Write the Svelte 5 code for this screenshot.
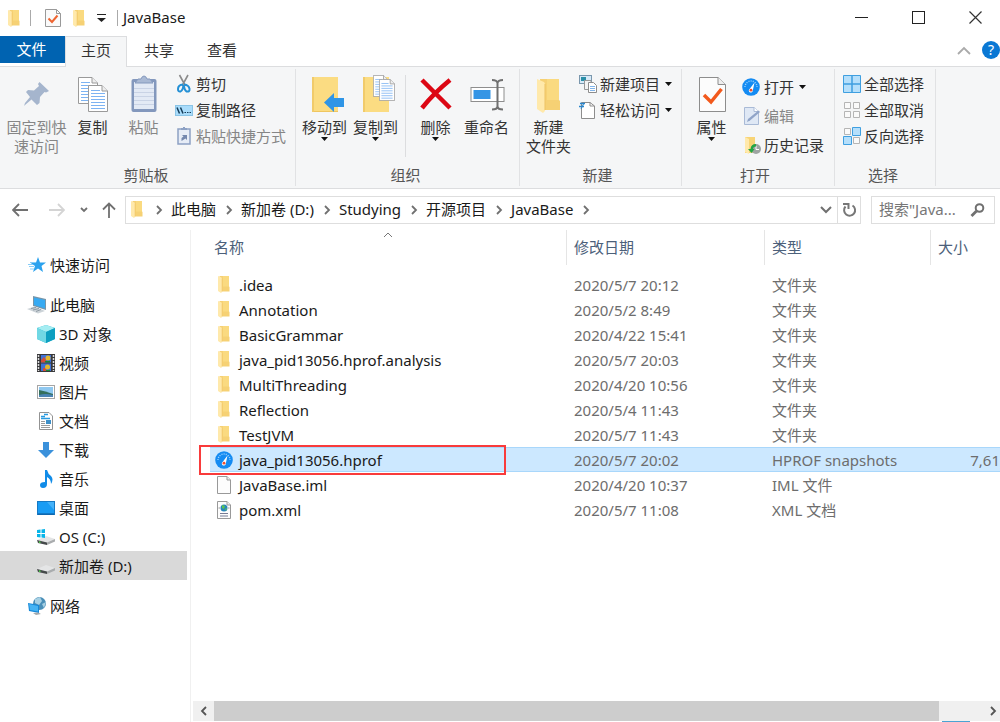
<script lang="ts">
	type Entry = {
		name: string;
		date: string;
		type: string;
		icon: string;
		size?: string;
		selected?: boolean;
	};

	const tabs = ['主页', '共享', '查看'];
	const crumbs = ['此电脑', '新加卷 (D:)', 'Studying', '开源项目', 'JavaBase'];

	const navGroups = [
		{ label: '快速访问', icon: 'star', children: [] },
		{
			label: '此电脑',
			icon: 'pc',
			children: [
				{ label: '3D 对象', icon: 'cube' },
				{ label: '视频', icon: 'video' },
				{ label: '图片', icon: 'picture' },
				{ label: '文档', icon: 'document' },
				{ label: '下载', icon: 'download' },
				{ label: '音乐', icon: 'music' },
				{ label: '桌面', icon: 'desktop' },
				{ label: 'OS (C:)', icon: 'osdrive' },
				{ label: '新加卷 (D:)', icon: 'drive' }
			]
		},
		{ label: '网络', icon: 'network', children: [] }
	];

	const entries: Entry[] = [
		{ name: '.idea', date: '2020/5/7 20:12', type: '文件夹', icon: 'folder' },
		{ name: 'Annotation', date: '2020/5/2 8:49', type: '文件夹', icon: 'folder' },
		{ name: 'BasicGrammar', date: '2020/4/22 15:41', type: '文件夹', icon: 'folder' },
		{ name: 'java_pid13056.hprof.analysis', date: '2020/5/7 20:03', type: '文件夹', icon: 'folder' },
		{ name: 'MultiThreading', date: '2020/4/20 10:56', type: '文件夹', icon: 'folder' },
		{ name: 'Reflection', date: '2020/5/4 11:43', type: '文件夹', icon: 'folder' },
		{ name: 'TestJVM', date: '2020/5/7 11:43', type: '文件夹', icon: 'folder' },
		{
			name: 'java_pid13056.hprof',
			date: '2020/5/7 20:02',
			type: 'HPROF snapshots',
			icon: 'gauge',
			size: '7,61',
			selected: true
		},
		{ name: 'JavaBase.iml', date: '2020/4/20 10:37', type: 'IML 文件', icon: 'file' },
		{ name: 'pom.xml', date: '2020/5/7 11:08', type: 'XML 文档', icon: 'xml' }
	];

	let activeTab = $state('主页');
	let activeNav = $state('新加卷 (D:)');
	let query = $state('');
</script>

{#snippet folder(w: number, h: number)}
	<svg width={w} height={h} viewBox="0 0 24 34" preserveAspectRatio="none" aria-hidden="true">
		<path d="M3 0H22V21L23 22V31H4Z" fill="#f6d174" />
		<path d="M10 0H22V21H10Z" fill="#fada80" />
		<path d="M0 0L7 3Q8 4 8 6V32L6 34L0 30Z" fill="#ffe9ab" />
		<path d="M8 5V31" stroke="#edc363" stroke-width="1" />
	</svg>
{/snippet}

{#snippet sheet(x: number, y: number, w: number, h: number)}
	<svg {x} {y} width={w} height={h} viewBox="0 0 20 27" preserveAspectRatio="none">
		<path d="M.5 .5H14L19.500 6V26.500H.5Z" fill="#fff" stroke="#9a9a9a" />
		<path d="M14 .5V6H19.500" fill="#eee" stroke="#9a9a9a" />
		<path d="M3 5.500H12M3 8.500H17M3 11.500H17M3 14.500H17M3 17.500H17M3 20.500H17M3 23.500H17" stroke="#7db3f2" />
	</svg>
{/snippet}

{#snippet gauge(size: number)}
	<svg width={size} height={size} viewBox="0 0 18 18" aria-hidden="true">
		<circle cx="9" cy="9" r="8.800" fill="#148bf2" />
		<path d="M3 9A6 6 0 0 1 15 9" fill="none" stroke="#9bd2ff" stroke-width="1.400" stroke-dasharray="1 1.200" />
		<path d="M12.500 4.500L10.800 12.500A2 2 0 1 1 7.600 11Z" fill="#fff" />
		<circle cx="9" cy="12.200" r="1.400" fill="#f0502d" />
	</svg>
{/snippet}

{#snippet bigIcon(name: string)}
	<svg width="40" height="40" viewBox="0 0 40 40" aria-hidden="true">
		{#if name === 'pin'}
			<path d="M22.500 7L32 16L29 17.500L27.500 17L23 22L22.500 28L20 30L14.500 24.500L8 30L7 31L8 28L13 22L9 17L11 15L17 15.500L22 11L21 9Z" fill="#a5b5cd" />
		{:else if name === 'copy'}
			{@render sheet(5, 2, 20, 27)}
			{@render sheet(15, 10, 20, 27)}
		{:else if name === 'paste'}
			<rect x="7.500" y="4" width="25" height="33" rx="2" fill="#8398bd" />
			<rect x="10" y="7" width="20" height="27" fill="#e3eaf5" />
			<path d="M10 13.500H30M10 17.500H30M10 21.500H30M10 25.500H30M10 29.500H30" stroke="#c9d3e5" />
			<path d="M11 8L14 4H17Q18 1 20 1T23 4H26L29 8Z" fill="#a9b9d4" stroke="#8398bd" />
		{:else if name === 'moveto'}
			<path d="M7 2H33V37H7Z" fill="#fbdc82" />
			<path d="M7 2H9V37H7Z" fill="#f1cb6b" />
			<path d="M9 36.500H33" stroke="#efc660" />
			<path d="M19 27.500L29 18V23H39V32H29V37Z" fill="#2f95e6" />
		{:else if name === 'copyto'}
			<path d="M7 2H33V37H7Z" fill="#fbdc82" />
			<path d="M7 2H9V37H7Z" fill="#f1cb6b" />
			{@render sheet(17, 0, 15, 22)}
			{@render sheet(23, 4, 16, 22)}
		{:else if name === 'delete'}
			<path d="M6 5L34 33M34 5Q18 18 6 33" fill="none" stroke="#dc0714" stroke-width="4.500" />
		{:else if name === 'rename'}
			<rect x="4" y="12.500" width="33" height="14" fill="#fff" stroke="#8e8e8e" />
			<rect x="6.500" y="15" width="17" height="9" fill="#3595e5" />
			<path d="M25 5Q30 5 30.500 8Q31 5 36 5M25 34.500Q30 34.500 30.500 31.500Q31 34.500 36 34.500M30.500 7V33" fill="none" stroke="#707070" stroke-width="2" />
		{:else if name === 'newfolder'}
			<svg x="8" y="4" width="24" height="34">{@render folder(24, 34)}</svg>
		{:else if name === 'props'}
			<path d="M7.500 2.500H26L33.500 9.500V36.500H7.500Z" fill="#fcfcfc" stroke="#8d8d8d" />
			<path d="M26 2.500V9.500H33.500" fill="#eee" stroke="#8d8d8d" />
			<path d="M12 20L19 27L29.500 14" fill="none" stroke="#f2591c" stroke-width="3.500" />
		{/if}
	</svg>
{/snippet}

{#snippet icon(name: string)}
	<svg width="20" height="20" viewBox="0 0 20 20" aria-hidden="true">
		{#if name === 'cut'}
			<path d="M5.500 1L11.500 12M14 1L8 12" fill="none" stroke="#8b8b8b" stroke-width="1.600" />
			<path d="M9 10.500Q4 11 4 15Q4 18 6.500 17.500Q9 16 9.500 11Q10.500 16 12.500 17.500Q16 18 15.500 15Q15 11 10 10.500" fill="none" stroke="#2490d5" stroke-width="2" />
		{:else if name === 'path'}
			<rect x="1.500" y="5.500" width="17" height="10" fill="#a9dcfb" stroke="#8ac4e6" />
			<path d="M3 7.500L5.500 13.500M6.500 7.500L9 13.500" stroke="#163d59" stroke-width="1.500" />
			<path d="M10.500 12.500H17" stroke="#163d59" stroke-dasharray="1.500 1" />
		{:else if name === 'pastelink'}
			<rect x="4" y="3" width="12" height="15" fill="#e6ecf6" stroke="#8da1c4" stroke-width="1.500" />
			<path d="M7 4V2H9V1H11V2H13V4Z" fill="#8da1c4" />
			<path d="M7.500 15V12L9.500 10.500L8 9H13V14L11.500 12.500Z" fill="#7488ae" />
		{:else if name === 'newitem'}
			<rect x="1.500" y="1.500" width="12" height="8" fill="#d7eaf8" stroke="#7a97ad" />
			<rect x="3" y="3" width="5" height="4" fill="#2b8fa8" />
			<path d="M6.500 6.500H13V15.500H6.500Z" fill="#f4f4f4" stroke="#999" />
			<path d="M10.500 8.500H15.500L18.500 11.500V18.500H10.500Z" fill="#fff" stroke="#8d8d8d" />
			<path d="M12 12.500H17M12 14.500H17M12 16.500H17" stroke="#82b5ea" />
		{:else if name === 'easy'}
			<path d="M3.500 2.500H12L16.500 6V18.500H3.500Z" fill="#fff" stroke="#8d8d8d" />
			<path d="M12 2.500V6H16.500" fill="none" stroke="#8d8d8d" />
			<path d="M2 3.500H7M1 6.500H6" stroke="#2b86cc" stroke-width="1.500" />
			<path d="M6 3L3 9" stroke="#2b86cc" />
		{:else if name === 'edit'}
			<path d="M2.500 1.500H12L16.500 5.500V18.500H2.500Z" fill="#dfe8f5" stroke="#a9bad6" />
			<path d="M12 1.500V5.500H16.500" fill="#fff" stroke="#a9bad6" />
			<path d="M5 16L6 13L16.500 4.500L18 6L8 14.500Z" fill="#90a4c8" />
		{:else if name === 'history'}
			<path d="M3 2H13V18H3Z" fill="#f8d476" />
			<path d="M3 2L7 4V19L3 17Z" fill="#ffe9ab" />
			<circle cx="14" cy="14" r="5" fill="#9ea4a2" />
			<path d="M14 11V14.500H17" fill="none" stroke="#fff" />
			<path d="M14 9Q9 9 8.500 14H6L9.500 18L12.500 14H11Q11 11.500 14 11.500Z" fill="#25a545" />
		{:else if name === 'all'}
			<path d="M1.500 1.500H18.500V18.500H1.500Z" fill="#b5dffb" stroke="#3f9fe0" />
			<path d="M10 1.500V18.500M1.500 10H18.500" stroke="#3f9fe0" stroke-width="1.500" />
		{:else if name === 'none'}
			<path d="M2.500 2.500H8.500V8.500H2.500ZM11.500 2.500H17.500V8.500H11.500ZM2.500 11.500H8.500V17.500H2.500ZM11.500 11.500H17.500V17.500H11.500Z" fill="#fafafa" stroke="#b5b5b5" />
		{:else if name === 'invert'}
			<path d="M2.500 2.500H8.500V8.500H2.500ZM11.500 11.500H17.500V17.500H11.500Z" fill="#fafafa" stroke="#b5b5b5" />
			<path d="M10.500 1.500H18.500V9.500H10.500ZM1.500 10.500H9.500V18.500H1.500Z" fill="#b5dffb" stroke="#3f9fe0" />
		{:else if name === 'star'}
			<path d="M11 2L13 7.500H19L14.500 11L16 17L11 13.500L6 17L8 11L3 7.500H9Z" fill="#2ba2ee" />
			<path d="M3 7.500H9M1 9.500H6M2 11.500H7M3 14H7" stroke="#86cdf8" />
		{:else if name === 'pc'}
			<path d="M6 1L19 4V15L6 11Z" fill="#7895a8" />
			<path d="M7 2.500L18 5V13.500L7 10Z" fill="#37aaf2" />
			<path d="M0 14L8 11.500L18 16L11 18.500Z" fill="#ccd3d8" />
			<path d="M4 13.500L9 12.500M6 15L12 13.500M9 16.500L14 14.500" stroke="#8e9aa3" />
		{:else if name === 'cube'}
			<path d="M10 1L19 4V15L10 19L1 15V4Z" fill="#2ab8cf" />
			<path d="M10 1L19 4L10 8L1 4Z" fill="#a5edf2" />
			<path d="M1 4L10 8V19L1 15Z" fill="#70d8e4" />
			<path d="M10 8L19 4V15L10 19Z" fill="#0d9fc0" />
		{:else if name === 'video'}
			<rect x="1" y="1" width="18" height="18" fill="#39393b" />
			<path d="M2.500 2V18M17.500 2V18" stroke="#ddd" stroke-width="1.500" stroke-dasharray="2 1" />
			<rect x="5" y="2" width="10" height="7.500" fill="#3f72d8" />
			<rect x="5" y="10.500" width="10" height="7.500" fill="#3f72d8" />
			<path d="M5 7L8 4L10 7V9.500H5ZM7 15H10V18H7Z" fill="#d24e36" />
			<circle cx="12" cy="5" r="2.500" fill="#e3b92c" />
			<circle cx="11.500" cy="14" r="2.500" fill="#e3b92c" />
			<path d="M9 8H14V9.500H9ZM10 17H14V18H10Z" fill="#1c8638" />
		{:else if name === 'picture'}
			<rect x="1.500" y="3.500" width="17" height="13" fill="#fff" stroke="#a5a5a5" />
			<rect x="3" y="5" width="14" height="10" fill="#8fc8f0" />
			<path d="M3 8Q9 9 17 12V15H3Z" fill="#35705d" />
			<path d="M3 13Q9 11 17 13V15H3Z" fill="#4b84b4" />
		{:else if name === 'document'}
			<path d="M3.500 1.500H13L16.500 5V18.500H3.500Z" fill="#fff" stroke="#939393" />
			<path d="M5 5.500H9M8 3.500H12M5 7.500H14" stroke="#289ae0" stroke-width="1.500" />
			<path d="M5 10.500H9M5 12.500H9M5 14.500H14M5 16.500H14" stroke="#9a9a9a" />
			<rect x="10" y="9" width="5" height="4" fill="#3d8fc8" />
		{:else if name === 'download'}
			<path d="M7 2H13V10H18L10 18L2 10H7Z" fill="#3b91db" />
		{:else if name === 'music'}
			<path d="M9 1H11Q12 5 15 7Q18 10 15 15Q15 10 11 8V15Q11 19 7 19Q4 19 4 16Q4 13 9 13Z" fill="#118ce8" />
		{:else if name === 'desktop'}
			<rect x="1" y="3" width="18" height="14" fill="#1679c4" />
			<rect x="2" y="4" width="16" height="12" fill="#199cf4" />
			<path d="M11 4H18V12Z" fill="#44b2fa" />
			<path d="M2 16H18" stroke="#0b5798" />
		{:else if name === 'osdrive' || name === 'drive'}
			<path d="M1 13L10 9L19 12L11 16Z" fill="#e4e5e6" />
			<path d="M1 13L11 15.500V18L2 16Z" fill="#45494a" />
			<path d="M11 15.500L19 12V14.500L11 18Z" fill="#a9acae" />
			<path d="M3 15L4.500 15.400" stroke="#52e34d" stroke-width="1.500" />
			{#if name === 'osdrive'}
				<path d="M1 3L4.500 2.500V6H1ZM5.500 2.500L9 2V6H5.500ZM1 7H4.500V10.500L1 10ZM5.500 7H9V11L5.500 10.500Z" fill="#08b5e9" />
			{/if}
		{:else if name === 'network'}
			<circle cx="12.500" cy="7.500" r="6.500" fill="#4a8fb8" />
			<path d="M8 3L13 1L15 5L12 9L8 7ZM15 8L19 6L17 12Z" fill="#a7d0e3" />
			<path d="M1 7L12 9V17L2 15Z" fill="#1688d8" />
			<path d="M2 8L11 10V15.500L3 14Z" fill="#45b3f3" />
			<path d="M6 17L11 16.500L14 18L9 19Z" fill="#a3a8ac" />
		{:else if name === 'file' || name === 'xml'}
			<path d="M3.500 1.500H13L16.500 5V18.500H3.500Z" fill="#fdfdfd" stroke="#999" />
			<path d="M13 1.500V5H16.500" fill="#eee" stroke="#999" />
			{#if name === 'xml'}
				<circle cx="10" cy="8" r="3.500" fill="#2686bc" />
				<path d="M8 5L11 6L10 9L8 8ZM11 9L13 8L12 11Z" fill="#5ac253" />
				<path d="M4.500 8H6M14 8H15.500" stroke="#999" />
				<path d="M6 13.500H14M6 16H14" stroke="#777c94" />
			{/if}
		{/if}
	</svg>
{/snippet}

{#snippet check()}
	<svg width="16" height="18" viewBox="0 0 16 18" aria-hidden="true">
		<path d="M.5 .5H11.500L15.500 4.500V17.500H.5Z" fill="#fafafa" stroke="#999" />
		<path d="M11.500 .5V4.500H15.500" fill="none" stroke="#999" />
		<path d="M3.500 9.500L7 13L12.500 6.500" fill="none" stroke="#ee6430" stroke-width="2" />
	</svg>
{/snippet}

{#snippet caret()}
	<svg class="caret" width="7" height="4" viewBox="0 0 7 4" aria-hidden="true"><path d="M0 0H7L3.500 4Z" fill="#111" /></svg>
{/snippet}

{#snippet chevron(color: string)}
	<svg class="chevron" width="8" height="10" viewBox="0 0 8 10" aria-hidden="true">
		<path d="M2 1L6 5L2 9" fill="none" stroke={color} stroke-width="1.800" />
	</svg>
{/snippet}

{#snippet bigButton(name: string, lines: string[], width: string, menu = false, disabled = false)}
	<button class="big {width}" {disabled}>
		{@render bigIcon(name)}
		{#each lines as line}
			<span>{line}</span>
		{/each}
		{#if menu}{@render caret()}{/if}
	</button>
{/snippet}

{#snippet smallButton(name: string, label: string, menu = false, disabled = false)}
	<button class="small" {disabled}>
		{#if name === 'gauge'}<span class="gauge">{@render gauge(18)}</span>{:else}{@render icon(name)}{/if}
		<span>{label}</span>
		{#if menu}{@render caret()}{/if}
	</button>
{/snippet}

<div class="window">
	<header class="titlebar">
		{@render folder(12, 17)}
		<span class="divider"></span>
		<button aria-label="属性">{@render check()}</button>
		<button aria-label="新建文件夹">{@render folder(12, 17)}</button>
		<button aria-label="自定义快速访问工具栏">
			<svg width="9" height="8" viewBox="0 0 9 8"><path d="M0 .5H9" stroke="#222" /><path d="M0 4H9L4.500 8Z" fill="#222" /></svg>
		</button>
		<span class="divider last"></span>
		<h1>JavaBase</h1>
		<div class="controls">
			<button aria-label="最小化"><svg width="13" height="13"><path d="M0 6.500H13" stroke="#222" /></svg></button>
			<button aria-label="最大化"><svg width="13" height="13"><rect x=".5" y=".5" width="12" height="12" fill="none" stroke="#222" /></svg></button>
			<button aria-label="关闭"><svg width="13" height="13"><path d="M.5 .5L12.500 12.500M12.500 .5L.5 12.500" stroke="#333" stroke-width="1.200" /></svg></button>
		</div>
	</header>

	<nav class="tabs">
		<button class="file">文件</button>
		{#each tabs as tab}
			<button class:active={tab === activeTab} onclick={() => (activeTab = tab)}>{tab}</button>
		{/each}
		<button class="collapse" aria-label="最小化功能区">
			<svg width="14" height="9"><path d="M1 8L7 2L13 8" fill="none" stroke="#aaa" stroke-width="1.800" /></svg>
		</button>
		<button class="help" aria-label="帮助">?</button>
	</nav>

	<div class="ribbon">
		<section class="clipboard">
			<div class="tools">
				{@render bigButton('pin', ['固定到快', '速访问'], 'wide', false, true)}
				{@render bigButton('copy', ['复制'], 'mid')}
				{@render bigButton('paste', ['粘贴'], 'mid', false, true)}
				<div class="stack">
					{@render smallButton('cut', '剪切')}
					{@render smallButton('path', '复制路径')}
					{@render smallButton('pastelink', '粘贴快捷方式', false, true)}
				</div>
			</div>
			<h2>剪贴板</h2>
		</section>
		<section class="organize">
			<div class="tools">
				{@render bigButton('moveto', ['移动到'], 'mid', true)}
				{@render bigButton('copyto', ['复制到'], 'mid', true)}
				<span class="rule"></span>
				{@render bigButton('delete', ['删除'], 'mid', true)}
				{@render bigButton('rename', ['重命名'], 'mid')}
			</div>
			<h2>组织</h2>
		</section>
		<section class="new">
			<div class="tools">
				{@render bigButton('newfolder', ['新建', '文件夹'], 'mid')}
				<div class="stack">
					{@render smallButton('newitem', '新建项目', true)}
					{@render smallButton('easy', '轻松访问', true)}
				</div>
			</div>
			<h2>新建</h2>
		</section>
		<section class="open">
			<div class="tools">
				{@render bigButton('props', ['属性'], 'mid', true)}
				<div class="stack loose">
					{@render smallButton('gauge', '打开', true)}
					{@render smallButton('edit', '编辑', false, true)}
					{@render smallButton('history', '历史记录')}
				</div>
			</div>
			<h2>打开</h2>
		</section>
		<section class="select">
			<div class="tools">
				<div class="stack">
					{@render smallButton('all', '全部选择')}
					{@render smallButton('none', '全部取消')}
					{@render smallButton('invert', '反向选择')}
				</div>
			</div>
			<h2>选择</h2>
		</section>
	</div>

	<div class="location">
		<div class="history">
			<button aria-label="后退"><svg width="16" height="14"><path d="M16 7H1.500M7 1L1 7L7 13" fill="none" stroke="#707070" stroke-width="1.800" /></svg></button>
			<button aria-label="前进" disabled><svg width="16" height="14"><path d="M0 7H14.500M9 1L15 7L9 13" fill="none" stroke="#d4d4d4" stroke-width="1.800" /></svg></button>
			<button class="recent" aria-label="最近浏览的位置"><svg width="8" height="6"><path d="M1 1L4 4L7 1" fill="none" stroke="#707070" stroke-width="1.800" /></svg></button>
			<button aria-label="上移"><svg width="14" height="16"><path d="M7 16V1.500M1 7.500L7 1.500L13 7.500" fill="none" stroke="#707070" stroke-width="1.800" /></svg></button>
		</div>
		<div class="address">
			<span class="place">{@render folder(12, 17)}</span>
			{@render chevron('#707070')}
			{#each crumbs as crumb}
				<button class="crumb">{crumb}</button>
				{@render chevron('#707070')}
			{/each}
			<button class="drop" aria-label="以前的位置"><svg width="12" height="8"><path d="M1 1L6 6L11 1" fill="none" stroke="#707070" stroke-width="2" /></svg></button>
			<button class="refresh" aria-label="刷新">
				<svg width="15" height="16" viewBox="0 0 15 16"><path d="M10.500 3.500A5.500 5.500 0 1 1 3.500 4.500" fill="none" stroke="#777" stroke-width="2" /><path d="M1 2H6.500V7" fill="none" stroke="#777" stroke-width="2" /></svg>
			</button>
		</div>
		<label class="search">
			<input type="text" aria-label="搜索" placeholder={'搜索"Java...'} bind:value={query} />
			<svg width="15" height="14" viewBox="0 0 15 14" aria-hidden="true"><circle cx="9.500" cy="5" r="3.800" fill="none" stroke="#707070" stroke-width="2" /><path d="M6.500 8L1.500 13" stroke="#707070" stroke-width="2.800" /></svg>
		</label>
	</div>

	<div class="body">
		<nav class="sidebar">
			{#each navGroups as group}
				<div class="group">
					<a href="#{group.icon}" onclick={() => (activeNav = group.label)}>{@render icon(group.icon)}{group.label}</a>
					{#each group.children as item}
						<a href="#{item.icon}" class="child" class:active={item.label === activeNav} onclick={() => (activeNav = item.label)}>
							{@render icon(item.icon)}{item.label}
						</a>
					{/each}
				</div>
			{/each}
		</nav>

		<main>
			<table>
				<thead>
					<tr>
						<th class="name">
							名称
							<svg class="sort" width="10" height="6"><path d="M1 5L5 1L9 5" fill="none" stroke="#777" /></svg>
						</th>
						<th class="date">修改日期</th>
						<th class="type">类型</th>
						<th class="size">大小</th>
					</tr>
				</thead>
				<tbody>
					{#each entries as entry}
						<tr class:selected={entry.selected}>
							<td class="name">
								<div class="entry">
									<span class="glyph">
										{#if entry.icon === 'folder'}
											{@render folder(12, 17)}
										{:else if entry.icon === 'gauge'}
											{@render gauge(18)}
										{:else}
											{@render icon(entry.icon)}
										{/if}
									</span>
									{entry.name}
								</div>
								{#if entry.selected}<span class="marker"></span>{/if}
							</td>
							<td>{entry.date}</td>
							<td>{entry.type}</td>
							<td class="amount">{entry.size ?? ''}</td>
						</tr>
					{/each}
				</tbody>
			</table>

			<div class="scrollbar">
				<button class="back" aria-label="向左滚动">{@render chevron('#555')}</button>
				<div class="track"><div class="thumb"></div></div>
				<button class="forward" aria-label="向右滚动">{@render chevron('#555')}</button>
			</div>
			<div class="viewmode"><span></span></div>
		</main>
	</div>
</div>

<style>
	:global(body) {
		margin: 0;
		background: #fff;
	}

	.window {
		display: flex;
		flex-direction: column;
		min-height: 100vh;
		overflow: hidden;
		color: #1a1a1a;
		font-family: 'Noto Sans', 'Noto Sans CJK SC', sans-serif;
		font-size: 15px;
		line-height: 20px;
	}

	button {
		display: flex;
		align-items: center;
		justify-content: center;
		padding: 0;
		border: 0;
		background: none;
		color: inherit;
		font: inherit;
		white-space: nowrap;
	}

	svg {
		flex: none;
	}

	h1,
	h2 {
		margin: 0;
		font-size: 15px;
		font-weight: 400;
	}

	.titlebar {
		display: flex;
		align-items: center;
		gap: 12px;
		height: 36px;
		padding-left: 8px;
	}

	.titlebar h1 {
		padding-bottom: 2px;
	}

	.divider {
		width: 1px;
		height: 16px;
		margin: 0 2px 0 -2px;
		background: #aaa;
	}

	.divider.last {
		margin: 0 -7px 0 -1px;
	}

	.controls {
		display: flex;
		gap: 9px;
		margin-left: auto;
	}

	.controls button {
		width: 48px;
		height: 36px;
		padding: 0 1px 1px 0;
	}

	.tabs {
		display: flex;
		height: 30px;
		border-bottom: 1px solid #dcdddf;
	}

	.tabs button {
		box-sizing: border-box;
		width: 62px;
		height: 31px;
		margin-right: 1px;
		padding-bottom: 4px;
		border: 1px solid transparent;
		border-bottom: 0;
		color: #333;
	}

	.tabs .file {
		width: 65px;
		height: 27px;
		margin: 0;
		padding: 0 2px 2px 0;
		background: #0063b1;
		color: #fff;
	}

	.tabs .active {
		border-color: #dcdddf;
		background: #f5f6f7;
	}

	.tabs .collapse {
		width: 18px;
		margin-left: auto;
	}

	.tabs .help {
		width: 18px;
		height: 18px;
		margin: 5px 0 0 8px;
		padding: 0;
		border: 0;
		border-radius: 50%;
		background: #0a78d4;
		color: #fff;
		font-size: 14px;
	}

	.ribbon {
		display: flex;
		border-bottom: 1px solid #dcdddf;
		background: #f5f6f7;
		color: #333;
	}

	.ribbon section {
		display: flex;
		flex-direction: column;
		box-sizing: border-box;
		min-height: 117px;
		margin: 2px 0;
		border-right: 1px solid #e1e2e4;
	}

	.ribbon h2 {
		margin-top: auto;
		padding-bottom: 1px;
		color: #555;
		text-align: center;
	}

	.tools {
		display: flex;
	}

	.clipboard {
		padding: 0 9px 0 6px;
	}

	.organize {
		padding: 0 7px 0 3px;
	}

	.new {
		padding: 0 9px 0 3px;
	}

	.open {
		padding: 0 10px 0 4px;
	}

	.select {
		padding: 0 11px 0 7px;
	}

	.big {
		flex-direction: column;
		justify-content: flex-start;
		padding-top: 6px;
		line-height: 19px;
	}

	.big svg {
		margin-bottom: 3px;
	}

	.wide {
		width: 61px;
	}

	.mid {
		width: 51px;
	}

	button:disabled {
		color: #868686;
	}

	.rule {
		width: 1px;
		height: 82px;
		margin: 6px 4px 0;
		background: #dcdddf;
	}

	.stack {
		display: flex;
		flex-direction: column;
		padding: 2px 0 0 5px;
	}

	.new .stack {
		padding-left: 4px;
	}

	.select .stack {
		padding-left: 0;
	}

	.loose {
		padding-top: 3px;
	}

	.small {
		justify-content: flex-start;
		gap: 2px;
		height: 26px;
	}

	.loose .small {
		height: 29px;
	}

	.small .caret {
		margin-left: 3px;
	}

	.gauge {
		display: flex;
		width: 20px;
	}

	.location {
		display: flex;
		align-items: center;
		height: 41px;
		padding-right: 5px;
	}

	.history {
		display: flex;
		align-items: center;
		gap: 21px;
		padding: 0 9px 0 12px;
	}

	.history .recent {
		margin: 0 -7px 0 -6px;
	}

	.address {
		display: flex;
		flex: 1;
		align-items: center;
		box-sizing: border-box;
		height: 28px;
		border: 1px solid #dedede;
	}

	.place {
		display: flex;
		margin: 0 3px 0 5px;
	}

	.address .chevron {
		margin: 0 8px 0 9px;
	}

	.crumb {
		padding-bottom: 2px;
	}

	.drop {
		width: 22px;
		margin-left: auto;
	}

	.refresh {
		width: 23px;
		height: 26px;
		border-left: 1px solid #dedede;
	}

	.search {
		display: flex;
		align-items: center;
		box-sizing: border-box;
		width: 124px;
		height: 28px;
		margin-left: 10px;
		padding: 0 9px 0 7px;
		border: 1px solid #dedede;
	}

	.search input {
		flex: 1;
		min-width: 0;
		padding: 0 0 2px;
		border: 0;
		outline: 0;
		background: none;
		color: #222;
		font: inherit;
	}

	.search input::placeholder {
		color: #777;
		opacity: 1;
	}

	.body {
		display: flex;
		flex: 1;
	}

	.sidebar {
		flex: none;
		box-sizing: border-box;
		width: 191px;
		padding: 20px 3px 0 0;
		border-right: 1px solid #f0f0f0;
	}

	.group {
		margin-bottom: 11px;
	}

	.sidebar a {
		display: flex;
		align-items: center;
		gap: 3px;
		height: 29px;
		padding-left: 27px;
		color: #1a1a1a;
		text-decoration: none;
	}

	.sidebar .child {
		padding-left: 36px;
	}

	.sidebar .active {
		background: #d9d9d9;
	}

	main {
		display: flex;
		flex: 1;
		flex-direction: column;
		min-width: 0;
	}

	table {
		width: calc(100% - 19px);
		margin-left: 19px;
		border-spacing: 0;
		table-layout: fixed;
	}

	th,
	td {
		box-sizing: border-box;
		height: 25px;
		padding: 0 0 0 8px;
		text-align: left;
		font-weight: 400;
		white-space: nowrap;
	}

	th {
		height: 35px;
		padding: 0 0 2px 7px;
		border-left: 1px solid #e5e5e5;
		color: #4c607a;
	}

	td {
		color: #6d6d6d;
	}

	tbody::before {
		display: block;
		height: 7px;
		content: '';
	}

	.name {
		position: relative;
		padding-left: 4px;
		border-left: 0;
		color: #1a1a1a;
	}

	th.name {
		color: #4c607a;
	}

	.date {
		width: 198px;
	}

	.type {
		width: 166px;
	}

	.size {
		width: 70px;
	}

	.sort {
		position: absolute;
		top: 2px;
		left: 50%;
		transform: translateX(-50%);
	}

	.entry {
		display: flex;
		align-items: center;
		gap: 5px;
	}

	.glyph {
		display: flex;
		justify-content: center;
		width: 20px;
	}

	.selected td {
		background: #cce8ff;
		box-shadow:
			inset 0 1px #a9d7fb,
			inset 0 -1px #a9d7fb;
	}

	.amount {
		padding: 0;
		text-align: right;
	}

	.marker {
		position: absolute;
		inset: -2px 60px -3px -11px;
		border: 2px solid #f93b3b;
	}

	.scrollbar {
		display: flex;
		height: 20px;
		margin: auto 0 0 2px;
		background: #f0f0f0;
	}

	.scrollbar button {
		width: 21px;
	}

	.scrollbar .forward {
		width: 15px;
	}

	.back :global(svg) {
		transform: scaleX(-1);
	}

	.track {
		flex: 1;
	}

	.thumb {
		height: 100%;
		margin-right: 46px;
		background: #cdcdcd;
	}

	.viewmode {
		display: flex;
		justify-content: flex-end;
		height: 1px;
		padding-right: 30px;
	}

	.viewmode span {
		width: 28px;
		background: #4aa3d3;
	}
</style>
